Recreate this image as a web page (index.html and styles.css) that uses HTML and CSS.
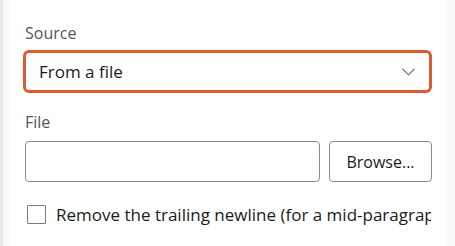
FILE: index.html
```html
<!DOCTYPE html>
<html>
<head>
<meta charset="utf-8">
<link rel="stylesheet" href="styles.css">
</head>
<body>
<div class="app">
  <div class="edge"><div class="edge-a"></div><div class="edge-line"></div><div class="edge-b"></div></div>
  <div class="panel">
    <div class="label">Source</div>
    <div class="select">
      <span class="select-value">From a file</span>
      <svg class="chev" width="13" height="8" viewBox="0 0 13 8"><path d="M0.5 0.8 L6.5 6.8 L12.5 0.8" fill="none" stroke="#5a6270" stroke-width="1.1"/></svg>
    </div>
    <div class="label label-file">File</div>
    <div class="file-row">
      <div class="file-input"></div>
      <div class="browse">Browse...</div>
    </div>
    <div class="check-row">
      <div class="checkbox"></div>
      <div class="check-text">Remove the trailing newline (for a mid-paragraph insertion)</div>
    </div>
  </div>
  <div class="right"></div>
</div>
</body>
</html>
```

FILE: styles.css
```css
html, body {
  margin: 0;
  padding: 0;
  background: #fafafa;
  font-family: "Open Sans", "Noto Sans", sans-serif;
}
.app {
  display: flex;
  width: 455px;
  height: 246px;
  overflow: hidden;
}
.edge {
  display: flex;
  width: 10px;
  flex: none;
}
.edge-a { width: 2px; background: #eaefed; }
.edge-line { width: 1px; background: #dde3e1; }
.edge-b { width: 7px; background: #fafafa; }
.panel {
  width: 437px;
  flex: none;
  background: #ffffff;
  box-sizing: border-box;
  padding: 22px 15px 0 13px;
  overflow: hidden;
}
.right { flex: 1; background: #fafafa; }
.label {
  font-size: 16px;
  line-height: 22px;
  color: #555555;
  padding-left: 2px;
}
.select {
  margin-top: 6px;
  height: 43px;
  box-sizing: border-box;
  border: 3px solid #dc5a2c;
  border-radius: 6px;
  display: flex;
  align-items: center;
  padding: 0 14px 0 13px;
}
.select-value {
  flex: 1;
  font-size: 17px;
  color: #1b1b1b;
}
.chev { flex: none; margin-top: 1px; }
.label-file { margin-top: 18px; }
.file-row {
  display: flex;
  gap: 9px;
  margin-top: 8px;
  padding-left: 2px;
}
.file-input {
  flex: 1;
  height: 41px;
  box-sizing: border-box;
  border: 1px solid #8a8a8a;
  border-radius: 4px;
}
.browse {
  width: 103px;
  height: 41px;
  box-sizing: border-box;
  border: 1px solid #8a8a8a;
  border-radius: 4px;
  display: flex;
  align-items: center;
  justify-content: center;
  font-size: 16px;
  color: #1b1b1b;
}
.check-row {
  display: flex;
  align-items: center;
  margin-top: 21px;
  padding-left: 4px;
  width: 404px;
  overflow: hidden;
  white-space: nowrap;
}
.checkbox {
  width: 19px;
  height: 19px;
  box-sizing: border-box;
  border: 1px solid #7a7a7a;
  border-radius: 1px;
  flex: none;
}
.check-text {
  margin-left: 10px;
  font-size: 17px;
  color: #1b1b1b;
}
```
